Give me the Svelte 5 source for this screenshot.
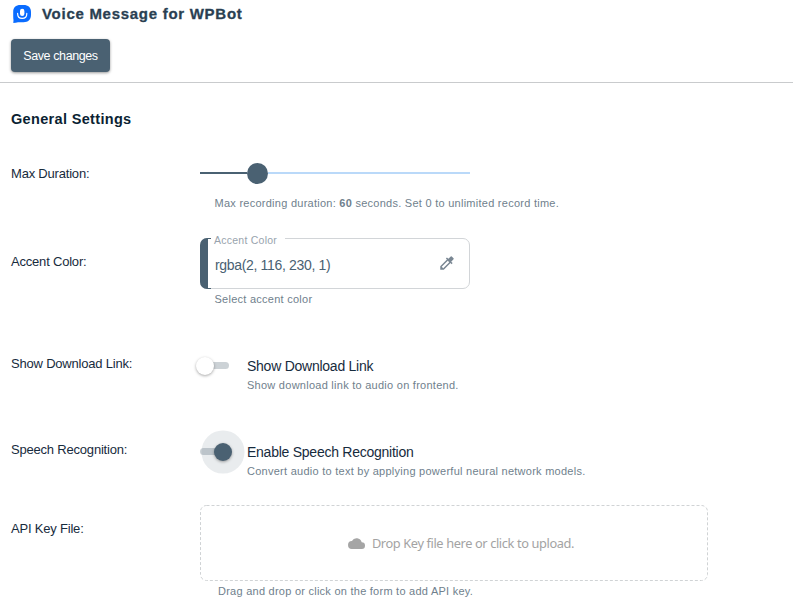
<script>
  let duration = $state(60);
  let accent = $state('rgba(2, 116, 230, 1)');
  let download = $state(false);
  let speech = $state(true);
</script>

<div class="page">
  <header>
    <div class="brand">
      <svg width="20" height="20" viewBox="0 0 20 20">
        <path d="M0.3 18.9L.5 16C.2 14.2 .2 12.5 .2 10V8C.2 3.2 2.7 1 7.5 1H10.5C15.3 1 18 3.2 18 8V10.7C18 15.5 15.3 18.2 10.5 18.2H5C3.5 18.7 2 18.9 .3 18.9Z" fill="#0a6cff" />
        <rect x="7" y="4.8" width="4.4" height="7.2" rx="2.2" fill="#fff" />
        <path d="M4.6 9.4C4.6 12.3 6.5 14.3 9.2 14.3S13.8 12.3 13.8 9.4" fill="none" stroke="#fff" stroke-width="1.2" stroke-linecap="round" />
      </svg>
      <h1>Voice Message for WPBot</h1>
    </div>
    <button class="save">Save changes</button>
  </header>

  <main>
    <h2>General Settings</h2>

    <div class="row duration">
      <div class="label">Max Duration:</div>
      <div class="field">
        <div class="slider"><span class="filled"></span><span class="thumb"></span><span class="rest"></span></div>
        <p class="help">Max recording duration: <b>{duration}</b> seconds. Set 0 to unlimited record time.</p>
      </div>
    </div>

    <div class="row accent">
      <div class="label">Accent Color:</div>
      <div class="field">
        <div class="color">
          <span class="swatch"></span>
          <span class="caption">Accent Color</span>
          <span class="value">{accent}</span>
          <svg width="18" height="18" viewBox="0 0 24 24" fill="#7a8793">
            <path d="M20.71 5.63l-2.34-2.34a1 1 0 0 0-1.41 0l-3.12 3.12-1.93-1.91-1.41 1.41 1.42 1.42L3 16.25V21h4.75l8.92-8.92 1.42 1.42 1.41-1.41-1.92-1.92 3.12-3.12a1 1 0 0 0 .01-1.42zM6.92 19L5 17.08l8.06-8.06 1.92 1.92L6.92 19z" />
          </svg>
        </div>
        <p class="help">Select accent color</p>
      </div>
    </div>

    <div class="row download">
      <div class="label">Show Download Link:</div>
      <div class="field option">
        <div class="switch" class:on={download}><span class="knob"></span></div>
        <div class="text">
          <div class="title">Show Download Link</div>
          <p class="help">Show download link to audio on frontend.</p>
        </div>
      </div>
    </div>

    <div class="row speech">
      <div class="label">Speech Recognition:</div>
      <div class="field option">
        <div class="switch" class:on={speech}><span class="knob"></span></div>
        <div class="text">
          <div class="title">Enable Speech Recognition</div>
          <p class="help">Convert audio to text by applying powerful neural network models.</p>
        </div>
      </div>
    </div>

    <div class="row key">
      <div class="label">API Key File:</div>
      <div class="field">
        <div class="drop">
          <svg class="outline" width="508" height="76"><rect x=".5" y=".5" width="507" height="75" rx="6" fill="none" stroke="#d0d3d5" stroke-dasharray="3 2" /></svg>
          <svg width="17" height="11" viewBox="0 0 17 11" fill="#a5a5a5"><path d="M13.7 4.2A5.3 5.3 0 0 0 3.9 3A4 4 0 0 0 4.2 11H13.5A3.4 3.4 0 0 0 13.7 4.2Z" /></svg>
          <span>Drop Key file here or click to upload.</span>
        </div>
        <p class="help">Drag and drop or click on the form to add API key.</p>
      </div>
    </div>
  </main>
</div>

<style>
  :global(body) { background: #fff; }
  .page { height: 605px; overflow: hidden; font-family: "Liberation Sans", Arial, sans-serif; color: #172b3d; }
  h1, h2, p { margin: 0; }
  header { box-sizing: border-box; height: 83px; padding: 4px 11px 0; border-bottom: 1px solid #c9cbcd; }
  .brand { display: flex; align-items: center; height: 20px; padding-left: 2px; gap: 9px; }
  .brand svg { flex: none; }
  h1 { font-size: 15px; line-height: 20px; letter-spacing: .72px; color: #2a3f52; white-space: nowrap; -webkit-text-stroke: .3px #2a3f52; }
  .save { display: block; box-sizing: border-box; width: 99px; height: 33px; margin-top: 15px; padding: 0; border: 0; border-radius: 4px; background: #4a6172; color: #fff; font: 12.5px/34px "Liberation Sans", Arial, sans-serif; letter-spacing: -.4px; box-shadow: 0 1px 3px rgba(0, 0, 0, .4); }
  main { padding: 26px 11px 0; }
  h2 { height: 51px; font-size: 14.5px; line-height: 20px; letter-spacing: .33px; color: #0b1f33; }
  .row { display: flex; }
  .label { flex: none; width: 189px; font-size: 13px; line-height: 18px; letter-spacing: -.2px; }
  .help { font-size: 11px; line-height: 14px; letter-spacing: .26px; color: #707f8d; white-space: nowrap; padding-left: 14.5px; }
  .duration { height: 78px; }
  .duration .label { padding-top: 5px; }
  .slider { display: flex; align-items: center; width: 270px; height: 26px; }
  .filled { width: 47px; height: 2px; background: #4a6172; }
  .thumb { width: 21px; height: 21px; border-radius: 50%; background: #4a6172; }
  .rest { flex: 1; height: 2px; background: #bad9f9; }
  .duration .help { padding-top: 10px; }
  .accent { height: 110px; }
  .accent .label { padding-top: 15px; }
  .color { position: relative; display: flex; align-items: center; box-sizing: border-box; width: 270px; height: 51px; padding: 0 13px 0 14px; border: 1px solid #d2d5d8; border-radius: 7px; }
  .color svg { margin-bottom: 1px; }
  .swatch { position: absolute; left: -1px; top: -1px; bottom: -1px; width: 8px; background: #4a6172; border-radius: 7px 0 0 7px; }
  .swatch::before, .swatch::after { content: ""; position: absolute; left: 7px; width: 4px; height: 1px; background: #4a6172; }
  .swatch::before { top: 0; }
  .swatch::after { bottom: 0; }
  .caption { position: absolute; left: 10px; top: -6px; padding: 0 8px 0 3px; background: #fff; font-size: 10.5px; line-height: 14px; letter-spacing: .25px; color: #98a3ad; }
  .value { flex: 1; font-size: 14px; color: #4a6172; letter-spacing: -.33px; padding-top: 2px; }
  .accent .help { padding-top: 3px; }
  .download { height: 86px; padding-top: 6px; box-sizing: border-box; }
  .speech { height: 71px; padding-top: 6px; box-sizing: border-box; }
  .download .label, .speech .label { padding-top: 1px; }
  .option { display: flex; }
  .option .text { margin-left: 18px; }
  .title { font-size: 14px; line-height: 20px; letter-spacing: -.25px; white-space: nowrap; padding-top: 2px; }
  .option .help { padding: 2px 0 0; }
  .switch { position: relative; width: 29px; height: 7px; margin-top: 8px; border-radius: 4px; background: #ccd2d6; }
  .knob { position: absolute; left: -4px; top: -5px; width: 18px; height: 18px; border-radius: 50%; background: #fff; box-shadow: 0 1px 3px rgba(0, 0, 0, .35); }
  .on .knob { left: 14px; background: #4a6172; box-shadow: 0 1px 3px rgba(0, 0, 0, .35), 0 0 0 12.5px rgba(74, 97, 114, .12); }
  .key .label { padding-top: 15px; }
  .drop { position: relative; display: flex; align-items: center; justify-content: center; box-sizing: border-box; width: 508px; height: 76px; padding-left: 14px; gap: 7px; font: 12.8px/18px "Noto Sans", "Open Sans", sans-serif; color: #a3a3a3; letter-spacing: -.38px; white-space: nowrap; }
  .outline { position: absolute; left: 0; top: 0; }
  .key .help { padding: 3px 0 0 18px; letter-spacing: .25px; }
</style>
